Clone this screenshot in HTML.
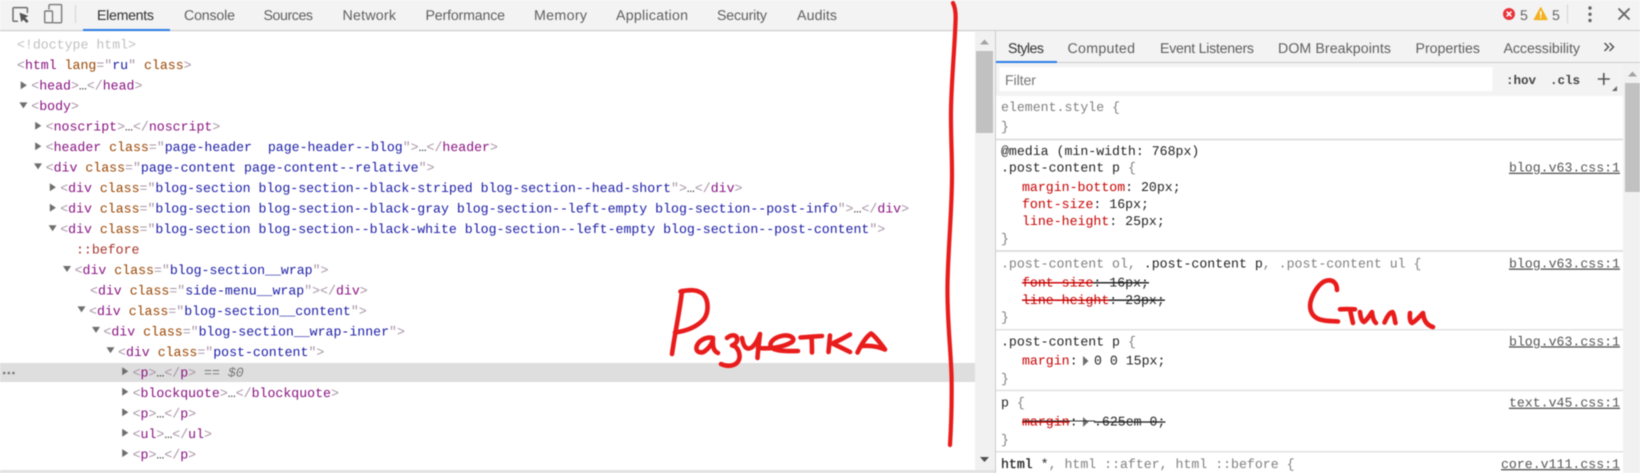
<!DOCTYPE html>
<html lang="ru">
<head>
<meta charset="utf-8">
<title>DevTools</title>
<style>
html,body{margin:0;padding:0;width:1640px;height:473px;overflow:hidden;background:#fff}
svg{display:block;filter:blur(.4px)}
text{white-space:pre;text-rendering:geometricPrecision}
.m{font-family:"Liberation Mono",monospace;font-size:13.22px}
.s{font-family:"Liberation Sans",sans-serif;font-size:14.2px;fill:#5f5f5f}
.t{fill:#881280}.a{fill:#994500}.v{fill:#1a1aa6}.b{fill:#a894a6}.e{fill:#333}
.p{fill:#c80000}.d{fill:#222}.g{fill:#808080}.k{fill:#222}
.l{fill:#555;text-decoration:underline}
.x{text-decoration:line-through}
.h{fill:none;stroke:#e91c1c;stroke-width:4.6;stroke-linecap:round;stroke-linejoin:round}
</style>
</head>
<body>
<svg width="1640" height="473" viewBox="0 0 1640 473" xmlns="http://www.w3.org/2000/svg">
<!-- top bar -->
<rect width="1640" height="30" fill="#f3f3f3"/>
<rect y="30" width="1640" height="1.2" fill="#ccc"/>
<rect x="83" y="29" width="87" height="2" fill="#2b7de9"/>
<rect x="75" y="5" width="1" height="18" fill="#d4d4d4"/>
<!-- inspect icon -->
<path d="M18 21.2H14a1 1 0 0 1-1-1V8.6a1 1 0 0 1 1-1H26.4a1 1 0 0 1 1 1V13" fill="none" stroke="#6e6e6e" stroke-width="1.5"/>
<path d="M19.6 12.6L28.4 16L25.2 17.8L28.6 21.2L26.6 23L23.4 19.6L21.2 22Z" fill="#555"/>
<!-- device icon -->
<path d="M49 9.5V5.6a1 1 0 0 1 1-1H60.6a1 1 0 0 1 1 1V21.8a1 1 0 0 1-1 1H53" fill="none" stroke="#7a7a7a" stroke-width="1.4"/>
<rect x="44.7" y="11" width="7.8" height="11.7" rx="1" fill="none" stroke="#7a7a7a" stroke-width="1.4"/>

<text class="s" x="97" y="20" textLength="57" style="fill:#333">Elements</text>
<text class="s" x="184" y="20" textLength="51">Console</text>
<text class="s" x="263.5" y="20" textLength="49.5">Sources</text>
<text class="s" x="342.5" y="20" textLength="53.5">Network</text>
<text class="s" x="425.5" y="20" textLength="79.5">Performance</text>
<text class="s" x="534" y="20" textLength="53">Memory</text>
<text class="s" x="616" y="20" textLength="72">Application</text>
<text class="s" x="717" y="20" textLength="50">Security</text>
<text class="s" x="797" y="20" textLength="40">Audits</text>

<!-- status -->
<circle cx="1509" cy="14" r="6" fill="#e8333a"/>
<path d="M1506.6 11.6L1511.4 16.4M1511.4 11.6L1506.6 16.4" stroke="#fff" stroke-width="1.6"/>
<text class="s" x="1520" y="20" textLength="7" style="fill:#666">5</text>
<path d="M1540.7 7.5L1547.2 19.6H1534.2Z" fill="#f2b01e" stroke="#f2b01e" stroke-width="1" stroke-linejoin="round"/>
<rect x="1540" y="11" width="1.5" height="4.6" fill="#fff"/><rect x="1540" y="16.6" width="1.5" height="1.5" fill="#fff"/>
<text class="s" x="1552" y="20" textLength="7" style="fill:#666">5</text>
<rect x="1567" y="4.5" width="1" height="19" fill="#d4d4d4"/>
<circle cx="1590" cy="8" r="1.7" fill="#666"/><circle cx="1590" cy="14.3" r="1.7" fill="#666"/><circle cx="1590" cy="20.5" r="1.7" fill="#666"/>
<path d="M1618.5 8.5L1629.5 19.5M1629.5 8.5L1618.5 19.5" stroke="#666" stroke-width="1.9"/>

<!-- left scrollbar -->
<rect x="975" y="31" width="20" height="439" fill="#f1f1f1"/>
<rect x="976" y="51" width="17" height="82" fill="#c1c1c1"/>
<path d="M980 44.5H989L984.5 39.5Z" fill="#a3a3a3"/>
<path d="M980 457H989L984.5 462Z" fill="#505050"/>
<rect x="0" y="470" width="995" height="3" fill="#e2e2e2"/>

<!-- selected row -->
<rect x="0" y="363" width="975" height="19" fill="#dedede"/>
<circle cx="4.200" cy="373" r="1.300" fill="#777"/><circle cx="8.800" cy="373" r="1.300" fill="#777"/><circle cx="13.400" cy="373" r="1.300" fill="#777"/>

<!-- triangles -->
<g fill="#6e6e6e">
<path d="M20.7 81.2V89.2L26.8 85.2Z"/>
<path d="M19.4 102.4H27.4L23.4 108.4Z"/>
<path d="M35.2 121.8V129.8L41.3 125.8Z"/>
<path d="M35.2 142.2V150.2L41.3 146.2Z"/>
<path d="M34 163.4H42L38 169.4Z"/>
<path d="M49.8 183.3V191.3L55.9 187.3Z"/>
<path d="M49.8 203.7V211.7L55.9 207.7Z"/>
<path d="M48.6 225.2H56.6L52.6 231.2Z"/>
<path d="M63 266H71L67 272Z"/>
<path d="M77.5 306.4H85.5L81.5 312.4Z"/>
<path d="M92 326.9H100L96 332.9Z"/>
<path d="M106.5 347.3H114.5L110.5 353.3Z"/>
<path d="M122.2 367.3V375.3L128.3 371.3Z"/>
<path d="M122.2 387.8V395.8L128.3 391.8Z"/>
<path d="M122.2 408.2V416.2L128.3 412.2Z"/>
<path d="M122.2 428.7V436.7L128.3 432.7Z"/>
<path d="M122.2 449.1V457.1L128.3 453.1Z"/>
</g>

<!-- DOM tree -->
<g class="m">
<text x="17" y="48.7" fill="#c0c0c0">&lt;!doctype html&gt;</text>
<text x="17" y="69.2"><tspan class="b">&lt;</tspan><tspan class="t">html</tspan> <tspan class="a">lang</tspan><tspan class="b">="</tspan><tspan class="v">ru</tspan><tspan class="b">"</tspan> <tspan class="a">class</tspan><tspan class="b">&gt;</tspan></text>
<text x="31.3" y="89.7"><tspan class="b">&lt;</tspan><tspan class="t">head</tspan><tspan class="b">&gt;</tspan><tspan class="e">…</tspan><tspan class="b">&lt;/</tspan><tspan class="t">head</tspan><tspan class="b">&gt;</tspan></text>
<text x="31.3" y="110.2"><tspan class="b">&lt;</tspan><tspan class="t">body</tspan><tspan class="b">&gt;</tspan></text>
<text x="45.7" y="130.7"><tspan class="b">&lt;</tspan><tspan class="t">noscript</tspan><tspan class="b">&gt;</tspan><tspan class="e">…</tspan><tspan class="b">&lt;/</tspan><tspan class="t">noscript</tspan><tspan class="b">&gt;</tspan></text>
<text x="45.7" y="151.2"><tspan class="b">&lt;</tspan><tspan class="t">header</tspan> <tspan class="a">class</tspan><tspan class="b">="</tspan><tspan class="v">page-header  page-header--blog</tspan><tspan class="b">"&gt;</tspan><tspan class="e">…</tspan><tspan class="b">&lt;/</tspan><tspan class="t">header</tspan><tspan class="b">&gt;</tspan></text>
<text x="45.7" y="171.6"><tspan class="b">&lt;</tspan><tspan class="t">div</tspan> <tspan class="a">class</tspan><tspan class="b">="</tspan><tspan class="v">page-content page-content--relative</tspan><tspan class="b">"&gt;</tspan></text>
<text x="60.2" y="192.1"><tspan class="b">&lt;</tspan><tspan class="t">div</tspan> <tspan class="a">class</tspan><tspan class="b">="</tspan><tspan class="v">blog-section blog-section--black-striped blog-section--head-short</tspan><tspan class="b">"&gt;</tspan><tspan class="e">…</tspan><tspan class="b">&lt;/</tspan><tspan class="t">div</tspan><tspan class="b">&gt;</tspan></text>
<text x="60.2" y="212.6"><tspan class="b">&lt;</tspan><tspan class="t">div</tspan> <tspan class="a">class</tspan><tspan class="b">="</tspan><tspan class="v">blog-section blog-section--black-gray blog-section--left-empty blog-section--post-info</tspan><tspan class="b">"&gt;</tspan><tspan class="e">…</tspan><tspan class="b">&lt;/</tspan><tspan class="t">div</tspan><tspan class="b">&gt;</tspan></text>
<text x="60.2" y="233.1"><tspan class="b">&lt;</tspan><tspan class="t">div</tspan> <tspan class="a">class</tspan><tspan class="b">="</tspan><tspan class="v">blog-section blog-section--black-white blog-section--left-empty blog-section--post-content</tspan><tspan class="b">"&gt;</tspan></text>
<text x="76" y="253.6" fill="#a5342b">::before</text>
<text x="74.6" y="274.1"><tspan class="b">&lt;</tspan><tspan class="t">div</tspan> <tspan class="a">class</tspan><tspan class="b">="</tspan><tspan class="v">blog-section__wrap</tspan><tspan class="b">"&gt;</tspan></text>
<text x="90" y="294.6"><tspan class="b">&lt;</tspan><tspan class="t">div</tspan> <tspan class="a">class</tspan><tspan class="b">="</tspan><tspan class="v">side-menu__wrap</tspan><tspan class="b">"&gt;&lt;/</tspan><tspan class="t">div</tspan><tspan class="b">&gt;</tspan></text>
<text x="89" y="315.1"><tspan class="b">&lt;</tspan><tspan class="t">div</tspan> <tspan class="a">class</tspan><tspan class="b">="</tspan><tspan class="v">blog-section__content</tspan><tspan class="b">"&gt;</tspan></text>
<text x="103.4" y="335.6"><tspan class="b">&lt;</tspan><tspan class="t">div</tspan> <tspan class="a">class</tspan><tspan class="b">="</tspan><tspan class="v">blog-section__wrap-inner</tspan><tspan class="b">"&gt;</tspan></text>
<text x="118" y="356"><tspan class="b">&lt;</tspan><tspan class="t">div</tspan> <tspan class="a">class</tspan><tspan class="b">="</tspan><tspan class="v">post-content</tspan><tspan class="b">"&gt;</tspan></text>
<text x="132.6" y="376.5"><tspan class="b">&lt;</tspan><tspan class="t">p</tspan><tspan class="b">&gt;</tspan><tspan class="e">…</tspan><tspan class="b">&lt;/</tspan><tspan class="t">p</tspan><tspan class="b">&gt;</tspan><tspan fill="#777" font-style="italic"> == $0</tspan></text>
<text x="132.6" y="397"><tspan class="b">&lt;</tspan><tspan class="t">blockquote</tspan><tspan class="b">&gt;</tspan><tspan class="e">…</tspan><tspan class="b">&lt;/</tspan><tspan class="t">blockquote</tspan><tspan class="b">&gt;</tspan></text>
<text x="132.6" y="417.5"><tspan class="b">&lt;</tspan><tspan class="t">p</tspan><tspan class="b">&gt;</tspan><tspan class="e">…</tspan><tspan class="b">&lt;/</tspan><tspan class="t">p</tspan><tspan class="b">&gt;</tspan></text>
<text x="132.6" y="438"><tspan class="b">&lt;</tspan><tspan class="t">ul</tspan><tspan class="b">&gt;</tspan><tspan class="e">…</tspan><tspan class="b">&lt;/</tspan><tspan class="t">ul</tspan><tspan class="b">&gt;</tspan></text>
<text x="132.6" y="458.5"><tspan class="b">&lt;</tspan><tspan class="t">p</tspan><tspan class="b">&gt;</tspan><tspan class="e">…</tspan><tspan class="b">&lt;/</tspan><tspan class="t">p</tspan><tspan class="b">&gt;</tspan></text>
</g>

<!-- right panel -->
<rect x="995" y="31" width="1" height="442" fill="#ccc"/>
<rect x="996" y="31" width="644" height="31" fill="#f3f3f3"/>
<rect x="996" y="62" width="644" height="1" fill="#ccc"/>
<rect x="996" y="61" width="61" height="2" fill="#2b7de9"/>
<text class="s" x="1008" y="53" textLength="36" style="fill:#333">Styles</text>
<text class="s" x="1067.5" y="53" textLength="67.5">Computed</text>
<text class="s" x="1160" y="53" textLength="94">Event Listeners</text>
<text class="s" x="1278" y="53" textLength="113">DOM Breakpoints</text>
<text class="s" x="1415.5" y="53" textLength="64.5">Properties</text>
<text class="s" x="1503.5" y="53" textLength="76.5">Accessibility</text>
<path d="M1604.5 43L1608.5 47L1604.5 51M1609.5 43L1613.5 47L1609.5 51" fill="none" stroke="#555" stroke-width="1.5"/>

<rect x="996" y="63" width="627" height="33" fill="#f3f3f3"/>
<rect x="999.5" y="67" width="493" height="24" fill="#fff"/>
<text class="s" x="1005" y="85" textLength="31" style="fill:#777">Filter</text>
<text class="m" x="1506" y="84" textLength="30" style="font-weight:bold;fill:#444;font-size:12.6px">:hov</text>
<text class="m" x="1550" y="84" textLength="30" style="font-weight:bold;fill:#444;font-size:12.6px">.cls</text>
<path d="M1597.8 79H1609.8M1603.8 73V85" stroke="#555" stroke-width="1.6"/>
<path d="M1612 91H1617V86Z" fill="#666"/>

<!-- right scrollbar -->
<rect x="1623" y="63" width="17" height="410" fill="#f1f1f1"/>
<rect x="1625" y="83" width="15" height="109" fill="#c1c1c1"/>
<path d="M1628 76.5H1637L1632.5 71.5Z" fill="#a3a3a3"/>

<!-- separators -->
<g fill="#e0e0e0">
<rect x="996" y="138.5" width="627" height="2"/>
<rect x="996" y="250" width="627" height="2"/>
<rect x="996" y="329" width="627" height="1.5"/>
<rect x="996" y="389.7" width="627" height="1.5"/>
<rect x="996" y="451" width="627" height="1.5"/>
</g>

<!-- style rules -->
<g class="m">
<text x="1001" y="111" class="g">element.style {</text>
<text x="1001" y="130.300" class="g">}</text>
<text x="1001" y="155" class="k">@media (min-width: 768px)</text>
<text x="1001" y="171.700"><tspan class="k">.post-content p</tspan> <tspan class="g">{</tspan></text>
<text x="1620" y="171.700" text-anchor="end" class="l">blog.v63.css:1</text>
<text x="1022" y="191"><tspan class="p">margin-bottom</tspan><tspan class="k">: 20px;</tspan></text>
<text x="1022" y="208"><tspan class="p">font-size</tspan><tspan class="k">: 16px;</tspan></text>
<text x="1022" y="225"><tspan class="p">line-height</tspan><tspan class="k">: 25px;</tspan></text>
<text x="1001" y="242.500" class="g">}</text>
<text x="1001" y="267.500"><tspan class="g">.post-content ol, </tspan><tspan class="k">.post-content p</tspan><tspan class="g">, .post-content ul {</tspan></text>
<text x="1620" y="267.500" text-anchor="end" class="l">blog.v63.css:1</text>
<text x="1022" y="286.500" class="x" fill="#222"><tspan class="p x">font-size</tspan><tspan class="k x">: 16px;</tspan></text>
<text x="1022" y="303.800" class="x" fill="#222"><tspan class="p x">line-height</tspan><tspan class="k x">: 23px;</tspan></text>
<text x="1001" y="320.800" class="g">}</text>
<text x="1001" y="345.300"><tspan class="k">.post-content p</tspan> <tspan class="g">{</tspan></text>
<text x="1620" y="345.300" text-anchor="end" class="l">blog.v63.css:1</text>
<text x="1022" y="364.700" class="p">margin</text>
<text x="1069.800" y="364.700" class="k">:</text>
<text x="1094" y="364.700" class="k">0 0 15px;</text>
<text x="1001" y="382.500" class="g">}</text>
<text x="1001" y="406.700"><tspan class="k">p</tspan> <tspan class="g">{</tspan></text>
<text x="1620" y="406.700" text-anchor="end" class="l">text.v45.css:1</text>
<text x="1022" y="425.700" class="p x">margin</text>
<text x="1069.800" y="425.700" class="k">:</text>
<text x="1094" y="425.700" class="k x">.625em 0;</text>
<text x="1001" y="443.500" class="g">}</text>
<text x="1001" y="468"><tspan class="k" style="stroke:#222;stroke-width:.3">html</tspan> <tspan class="k">*</tspan><tspan class="g">, html ::after, html ::before {</tspan></text>
<text x="1620" y="468" text-anchor="end" class="l">core.v111.css:1</text>
</g>
<path d="M1083 356V366L1088.500 361Z M1083 417V427L1088.500 422Z" fill="#6e6e6e"/>
<rect x="1023" y="420.500" width="72" height="1" fill="#333"/>

<!-- red annotations -->
<path class="h" style="stroke-width:4.200" d="M953 3C955.500 8 956 14 955.500 22C954.500 50 951.500 80 951 110C950.700 135 952 150 952 175C952 210 948 250 947.500 285C947 320 950.500 345 951.500 375C952 398 951.500 420 950 445"/>
<path class="h" d="M682 291C680 310 675 332 672 354"/>
<path class="h" d="M680.500 291.500C688 290 698 288.500 704 295C708.500 301 709 312 704 319C697 327 686 331 675 332.500"/>
<path class="h" d="M713 338C706 336 698 341 696.500 347C695.500 352 701 354 705 351C709 348 712 344 713 339.500C712.500 345 713 351 718 353"/>
<path class="h" d="M727 338C730 335 736 334 737 338C738 342 735 344 732 345.500C737 346 740 352 739.500 358C738 365 730 368 721 364"/>
<path class="h" d="M742 338C743 344 745 349 749 348.500C753 348 757 342 760 334C759 342 758 350 757.500 358"/>
<path class="h" d="M758 348C768 349 782 348 792 342C796 338 790 335 784 335.500C776 336.500 770 341 770.500 345.500C771 350 780 351.500 798 351"/>
<path class="h" d="M800.500 337.500C807 337 815 336.500 822 336M811.500 337.500C812 342 812 348 812 352.500"/>
<path class="h" d="M830 335.500C829.500 341 829 347 828.500 352"/>
<path class="h" d="M850 334.500C844 338 838 341 832.500 343.500C838 346 844 349 850 352"/>
<path class="h" d="M857.500 352.500C861 345 866 337 871 333.500C875 336 881 344 885 349.500C878 346.500 870 345.500 863 346"/>
<path class="h" d="M1337 290C1337 283 1333 279.500 1327 280.500C1320 282 1313 292 1310.500 302C1309 310 1312 317 1320 319.500C1327 321.500 1333 321 1338 321.500"/>
<path class="h" d="M1340 309.300C1345 308.800 1350 309 1355 309.300M1350 309.500C1351 314 1352 319 1353 323"/>
<path class="h" d="M1360 312C1360.500 317 1361.500 321 1364 322C1367 320 1370 315 1372 312C1372.500 317 1373.500 321 1376 323"/>
<path class="h" d="M1384.500 322.500C1386.500 318 1389 312.500 1392.500 312C1394.500 315 1394.500 320 1395.500 323"/>
<path class="h" d="M1410 313C1409.500 318 1410 322 1412 323C1416 321 1420 316 1423 313C1423.500 319 1426 325 1433 327"/>
</svg>
</body>
</html>
